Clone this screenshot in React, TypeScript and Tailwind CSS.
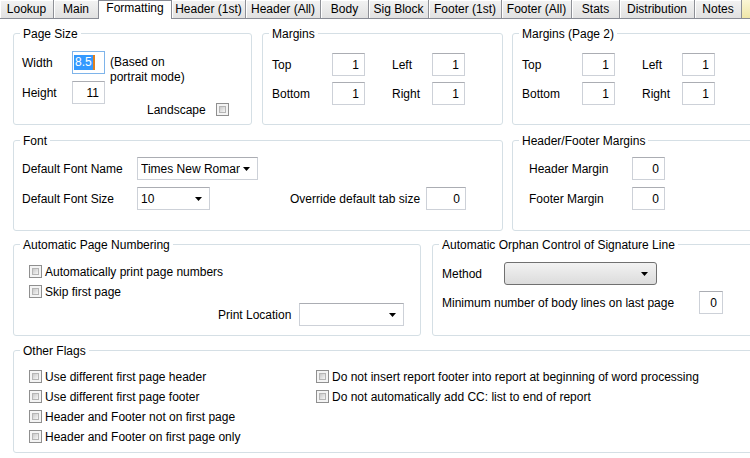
import React from 'react';

const tabs = [
  { label: 'Lookup', w: 'w-[54px]' },
  { label: 'Main', w: 'w-[45px]' },
  { label: 'Formatting', w: 'w-[74px]', active: true },
  { label: 'Header (1st)', w: 'w-[74px]' },
  { label: 'Header (All)', w: 'w-[75px]' },
  { label: 'Body', w: 'w-[48px]' },
  { label: 'Sig Block', w: 'w-[60px]' },
  { label: 'Footer (1st)', w: 'w-[73px]' },
  { label: 'Footer (All)', w: 'w-[70px]' },
  { label: 'Stats', w: 'w-[48px]' },
  { label: 'Distribution', w: 'w-[75px]' },
  { label: 'Notes', w: 'w-[47px]' },
];

const Arrow = () => (
  <svg width="7" height="4" viewBox="0 0 7 4" className="shrink-0">
    <path d="M0 0h7L3.5 4z" fill="#000" />
  </svg>
);

const GroupBox: React.FC<{ title: string; className: string; children?: React.ReactNode }> = ({ title, className, children }) => (
  <div className={`relative shrink-0 rounded-[3px] border border-[#d5dfe5] ${className}`}>
    <span className="absolute -top-[7px] left-[6px] bg-white px-[3px] leading-[14px] whitespace-nowrap">{title}</span>
    {children}
  </div>
);

const TextBox: React.FC<{ value: string; w: string; focus?: boolean }> = ({ value, w, focus }) =>
  focus ? (
    <div className={`${w} h-[23px] shrink-0 border border-[#7eb4ea] flex items-center pl-[1px]`}>
      <span className="bg-[#3399ff] text-white leading-[15px] px-[1px]">{value}</span>
      <span className="w-[2px] h-[15px] bg-[#e0801f]" />
    </div>
  ) : (
    <div className={`${w} h-[23px] shrink-0 border border-[#cdd1d8] border-t-[#abadb3] flex items-center justify-end pr-[5px]`}>
      {value}
    </div>
  );

const Select: React.FC<{ value?: string; w: string; textW: string }> = ({ value, w, textW }) => (
  <div className={`${w} h-[23px] shrink-0 border border-[#cdd1d8] border-t-[#abadb3] flex items-center pl-[3px] pr-[7px]`}>
    <span className={`${textW} overflow-hidden whitespace-nowrap`}>{value}</span>
    <span className="flex-1" />
    <Arrow />
  </div>
);

const CheckBox = () => (
  <div className="w-[13px] h-[13px] shrink-0 border border-[#8f8f8f] bg-[#f4f4f4] p-[2px]">
    <div className="w-full h-full bg-gradient-to-br from-[#c9c9c9] to-[#f6f6f6] border border-[#b5b5b5]" />
  </div>
);

const Check: React.FC<{ label: string }> = ({ label }) => (
  <div className="flex items-center h-[13px] gap-[3px] whitespace-nowrap">
    <CheckBox />
    <span>{label}</span>
  </div>
);

const MarginGrid = () => (
  <div className="grid grid-cols-[60px_33px_27px_40px_33px] gap-y-[6px] items-center pl-[9px] pt-[19px]">
    <span>Top</span>
    <TextBox value="1" w="w-[33px]" />
    <span />
    <span>Left</span>
    <TextBox value="1" w="w-[33px]" />
    <span>Bottom</span>
    <TextBox value="1" w="w-[33px]" />
    <span />
    <span>Right</span>
    <TextBox value="1" w="w-[33px]" />
  </div>
);

export default function App() {
  return (
    <div className="w-[750px] h-[458px] overflow-hidden bg-white text-black text-[12px] leading-[14px] font-['Liberation_Sans',Arial,sans-serif]">
      {/* tab strip */}
      <div className="flex h-[19px] border-b border-[#898c95]">
        {tabs.map((t) =>
          t.active ? (
            <div
              key={t.label}
              className={`${t.w} shrink-0 h-[19px] relative z-10 -ml-px bg-white border-x border-t border-[#898c95] text-center leading-[14px] whitespace-nowrap`}
            >
              {t.label}
            </div>
          ) : (
            <div
              key={t.label}
              className={`${t.w} shrink-0 h-[18px] bg-gradient-to-b from-[#f3f3f3] to-[#e1e1e1] border-r border-[#8e9096] shadow-[inset_1px_1px_0_#ffffff] flex items-center justify-center whitespace-nowrap`}
            >
              {t.label}
            </div>
          )
        )}
        <div className="w-[20px] shrink-0 h-[18px] bg-gradient-to-b from-[#fbf6d6] to-[#efe6a8]" />
      </div>

      {/* row 1 */}
      <div className="flex mt-[14px]">
        <GroupBox title="Page Size" className="ml-[13px] w-[239px] h-[92px]">
          <div className="pl-[8px] pt-[17px]">
            <div className="flex items-start h-[23px]">
              <span className="w-[50px] h-[23px] flex items-center">Width</span>
              <TextBox value="8.5" w="w-[33px]" focus />
              <span className="ml-[5px] mt-[4px] leading-[15px]">
                (Based on
                <br />
                portrait mode)
              </span>
            </div>
            <div className="flex items-center mt-[7px]">
              <span className="w-[50px]">Height</span>
              <TextBox value="11" w="w-[33px]" />
            </div>
            <div className="flex items-center h-[13px] -mt-[1px] pl-[125px]">
              <span className="w-[69px]">Landscape</span>
              <CheckBox />
            </div>
          </div>
        </GroupBox>
        <GroupBox title="Margins" className="ml-[10px] w-[241px] h-[92px]">
          <MarginGrid />
        </GroupBox>
        <GroupBox title="Margins (Page 2)" className="ml-[9px] w-[260px] h-[92px]">
          <MarginGrid />
        </GroupBox>
      </div>

      {/* row 2 */}
      <div className="flex mt-[15px]">
        <GroupBox title="Font" className="ml-[13px] w-[490px] h-[91px]">
          <div className="pl-[8px] pt-[16px]">
            <div className="flex items-center">
              <span className="w-[115px]">Default Font Name</span>
              <Select value="Times New Roman" w="w-[121px]" textW="w-[99px]" />
            </div>
            <div className="flex items-center mt-[7px]">
              <span className="w-[115px]">Default Font Size</span>
              <Select value="10" w="w-[73px]" textW="w-[40px]" />
              <span className="ml-[80px] w-[136px] whitespace-nowrap">Override default tab size</span>
              <TextBox value="0" w="w-[40px]" />
            </div>
          </div>
        </GroupBox>
        <GroupBox title="Header/Footer Margins" className="ml-[9px] w-[260px] h-[91px]">
          <div className="pl-[16px] pt-[16px]">
            <div className="flex items-center">
              <span className="w-[103px]">Header Margin</span>
              <TextBox value="0" w="w-[33px]" />
            </div>
            <div className="flex items-center mt-[7px]">
              <span className="w-[103px]">Footer Margin</span>
              <TextBox value="0" w="w-[33px]" />
            </div>
          </div>
        </GroupBox>
      </div>

      {/* row 3 */}
      <div className="flex mt-[13px]">
        <GroupBox title="Automatic Page Numbering" className="ml-[13px] w-[408px] h-[92px]">
          <div className="pl-[15px] pt-[20px]">
            <div className="flex flex-col gap-[7px]">
              <Check label="Automatically print page numbers" />
              <Check label="Skip first page" />
            </div>
            <div className="flex items-center mt-[5px] pl-[189px]">
              <span className="w-[81px]">Print Location</span>
              <Select w="w-[105px]" textW="w-[60px]" />
            </div>
          </div>
        </GroupBox>
        <GroupBox title="Automatic Orphan Control of Signature Line" className="ml-[11px] w-[330px] h-[92px]">
          <div className="pl-[9px] pt-[17px]">
            <div className="flex items-center">
              <span className="w-[62px]">Method</span>
              <div className="w-[153px] h-[23px] rounded-[3px] border border-[#707070] bg-gradient-to-b from-[#f2f2f2] to-[#dcdcdc] flex items-center justify-end pr-[8px]">
                <Arrow />
              </div>
            </div>
            <div className="flex items-center mt-[6px]">
              <span className="w-[257px] whitespace-nowrap">Minimum number of body lines on last page</span>
              <TextBox value="0" w="w-[24px]" />
            </div>
          </div>
        </GroupBox>
      </div>

      {/* row 4 */}
      <div className="flex mt-[14px]">
        <GroupBox title="Other Flags" className="ml-[13px] w-[750px] h-[103px]">
          <div className="flex pl-[15px] pt-[19px]">
            <div className="w-[287px] flex flex-col gap-[7px]">
              <Check label="Use different first page header" />
              <Check label="Use different first page footer" />
              <Check label="Header and Footer not on first page" />
              <Check label="Header and Footer on first page only" />
            </div>
            <div className="flex flex-col gap-[7px]">
              <Check label="Do not insert report footer into report at beginning of word processing" />
              <Check label="Do not automatically add CC: list to end of report" />
            </div>
          </div>
        </GroupBox>
      </div>
    </div>
  );
}
